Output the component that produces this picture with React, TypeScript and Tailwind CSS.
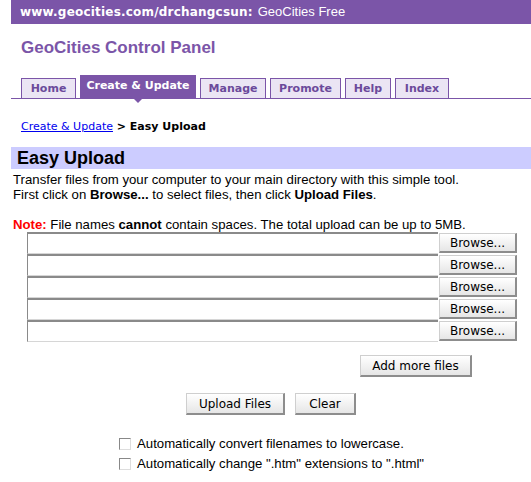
import React from "react";

const tabs = [
  { label: "Home", w: "w-[55px]" },
  { label: "Create & Update", w: "w-[116px]", active: true },
  { label: "Manage", w: "w-[66px]" },
  { label: "Promote", w: "w-[71px]" },
  { label: "Help", w: "w-[46px]" },
  { label: "Index", w: "w-[54px]" },
];

const verdana = { fontFamily: "'DejaVu Sans', Verdana, sans-serif" };

function MacButton({ children, className = "" }: { children: React.ReactNode; className?: string }) {
  return (
    <button
      className={`h-[20px] bg-gradient-to-b from-white to-[#e6e6e6] border border-[#cfcfcf] border-r-2 border-b-2 border-r-[#8d8d8d] border-b-[#8d8d8d] text-[12px] text-black leading-none font-['DejaVu_Sans',sans-serif] ${className}`}
    >
      {children}
    </button>
  );
}

export default function App() {
  return (
    <div className="w-[531px] h-[482px] overflow-hidden bg-white text-black font-['Liberation_Sans',Arial,sans-serif]">
      {/* top bar */}
      <div className="ml-[11px] h-[24px] bg-[#7b55a8] pl-[9px] flex items-center text-white text-[12px]" style={verdana}>
        <span className="font-bold tracking-[0.2px]">www.geocities.com/drchangcsun:</span>
        <span className="ml-[5px] font-['Liberation_Sans',sans-serif] text-[13px]">GeoCities Free</span>
      </div>

      {/* title */}
      <h1 className="pl-[21px] mt-[13px] text-[17px] font-bold text-[#7b55a8] leading-[22px]">GeoCities Control Panel</h1>

      {/* tabs */}
      <div className="ml-[11px] mt-[16px] h-[24px] flex items-end gap-[4px] pl-[10px] border-b border-[#7b55a8] relative">
        {tabs.map((t) =>
          t.active ? (
            <div
              key={t.label}
              className={`${t.w} h-[23px] bg-[#7b55a8] text-white text-[11px] font-bold flex items-start justify-center pt-[3px] relative`}
              style={verdana}
            >
              {t.label}
              <span className="absolute left-1/2 -translate-x-1/2 top-full w-0 h-0 border-l-[5px] border-r-[5px] border-t-[5px] border-l-transparent border-r-transparent border-t-[#7b55a8]" />
            </div>
          ) : (
            <div
              key={t.label}
              className={`${t.w} h-[20px] bg-[#ebe5f4] border border-b-0 border-[#7b55a8] text-[#6b4a9b] text-[11px] font-bold flex items-center justify-center pt-[1px]`}
              style={verdana}
            >
              {t.label}
            </div>
          )
        )}
      </div>

      {/* breadcrumb */}
      <div className="pl-[21px] mt-[21px] text-[11px] leading-[14px]" style={verdana}>
        <a className="text-[#0000ee] underline">Create &amp; Update</a>
        <span className="font-bold"> &gt; Easy Upload</span>
      </div>

      {/* section bar */}
      <div className="ml-[11px] mt-[13px] h-[22px] bg-[#ccccff] pl-[6px] flex items-center text-[18px] font-bold leading-none">
        Easy Upload
      </div>

      <div className="pl-[13px] pt-[3px] text-[13.2px] leading-[15px]">
        <p>Transfer files from your computer to your main directory with this simple tool.</p>
        <p>
          First click on <b>Browse...</b> to select files, then click <b>Upload Files</b>.
        </p>
        <p className="mt-[15px]">
          <b className="text-[#ff0000]">Note:</b> File names <b>cannot</b> contain spaces. The total upload can be up to 5MB.
        </p>
      </div>

      {/* file rows */}
      <div className="pl-[27px] flex flex-col">
        {[0, 1, 2, 3, 4].map((i) => (
          <div key={i} className="flex items-center h-[22px]">
            <div className="w-[411px] h-[22px] bg-white border-t-2 border-l border-[#8a8a8a] border-b border-r-0 border-b-[#d6d6d6]" />
            <MacButton className="w-[78px] h-[19px] ml-[1px]">Browse...</MacButton>
          </div>
        ))}
      </div>

      <div className="flex justify-end pr-[59px] mt-[13px]">
        <MacButton className="w-[112px] h-[22px]">Add more files</MacButton>
      </div>

      <div className="flex justify-center gap-[10px] pl-[11px] mt-[16px]">
        <MacButton className="w-[99px] h-[22px]">Upload Files</MacButton>
        <MacButton className="w-[61px] h-[22px]">Clear</MacButton>
      </div>

      <div className="pl-[119px] mt-[19px] text-[13.2px] leading-[20px]">
        {["Automatically convert filenames to lowercase.", 'Automatically change ".htm" extensions to ".html"'].map((s) => (
          <label key={s} className="flex items-center gap-[6px]">
            <span className="w-[12px] h-[12px] border-t border-l border-[#888] border-r border-b border-r-[#ddd] border-b-[#ddd] bg-white" />
            {s}
          </label>
        ))}
      </div>
    </div>
  );
}
